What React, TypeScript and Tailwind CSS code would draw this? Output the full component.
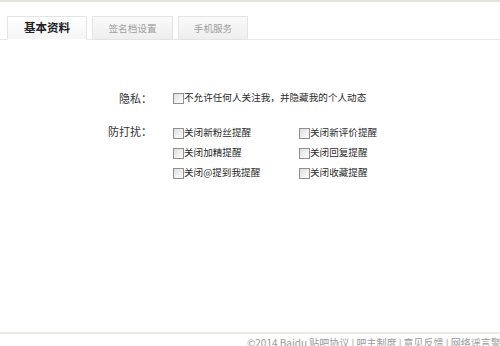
import React from "react";

// ── 데이터 ──────────────────────────────────────────────
const TABS = [
  { label: "基本资料", active: true, w: "w-[80px]" },
  { label: "签名档设置", active: false, w: "w-[81px]" },
  { label: "手机服务", active: false, w: "w-[70px]" },
];

const DISTURB = [
  ["关闭新粉丝提醒", "关闭新评价提醒"],
  ["关闭加精提醒", "关闭回复提醒"],
  ["关闭@提到我提醒", "关闭收藏提醒"],
];

const FONT = { fontFamily: '"SimSun", "Noto Sans CJK SC", "Liberation Sans", sans-serif' };

function Box() {
  return (
    <span className="inline-block w-[11px] h-[11px] shrink-0 border border-[#8f8f8f] bg-gradient-to-br from-[#dedede] to-white" />
  );
}

function Check({ text }: { text: string }) {
  return (
    <label className="flex items-center h-[20px] text-[9.6px] text-[#2a2a2a] leading-none">
      <Box />
      <span>{text}</span>
    </label>
  );
}

export default function App() {
  return (
    <div className="w-[500px] h-[346px] overflow-hidden bg-white" style={FONT}>
      <div className="h-[332px] border-t-2 border-[#e3e3db]">
        {/* 탭 */}
        <div className="flex items-end gap-[5px] pl-[7px] pt-[12px] border-b border-[#e8e8e8] h-[38px]">
          {TABS.map((t) => (
            <div
              key={t.label}
              className={`${t.w} h-[24px] -mb-px flex items-center justify-center border border-[#e4e4e4] ${
                t.active
                  ? "bg-gradient-to-b from-white to-[#f5f5f5] border-b-white font-bold text-[11.5px] text-[#222]"
                  : "bg-gradient-to-b from-[#f9f9f9] to-[#eeeeee] text-[9.6px] text-[#a0a0a0]"
              }`}
            >
              {t.label}
            </div>
          ))}
        </div>

        {/* 폼 */}
        <div className="mt-[48px]">
          <div className="flex h-[20px] items-center">
            <div className="w-[152px] text-right text-[11px] text-[#333] leading-none">隐私：</div>
            <div className="ml-[21px]">
              <Check text="不允许任何人关注我，并隐藏我的个人动态" />
            </div>
          </div>

          <div className="flex mt-[15px]">
            <div className="w-[152px] pt-[3px] text-right text-[11px] text-[#333] leading-none">防打扰：</div>
            <div className="ml-[21px] flex flex-col">
              {DISTURB.map(([a, b]) => (
                <div key={a} className="flex">
                  <div className="w-[126px]">
                    <Check text={a} />
                  </div>
                  <Check text={b} />
                </div>
              ))}
            </div>
          </div>
        </div>
      </div>

      {/* 푸터 */}
      <div className="border-t-2 border-[#ebebe5] pt-[3px] pl-[247px] whitespace-nowrap text-[10px] leading-[12px] text-[#9a9a9a]">
        ©2014 Baidu 贴吧协议 | 吧主制度 | 意见反馈 | 网络谣言警示
      </div>
    </div>
  );
}
